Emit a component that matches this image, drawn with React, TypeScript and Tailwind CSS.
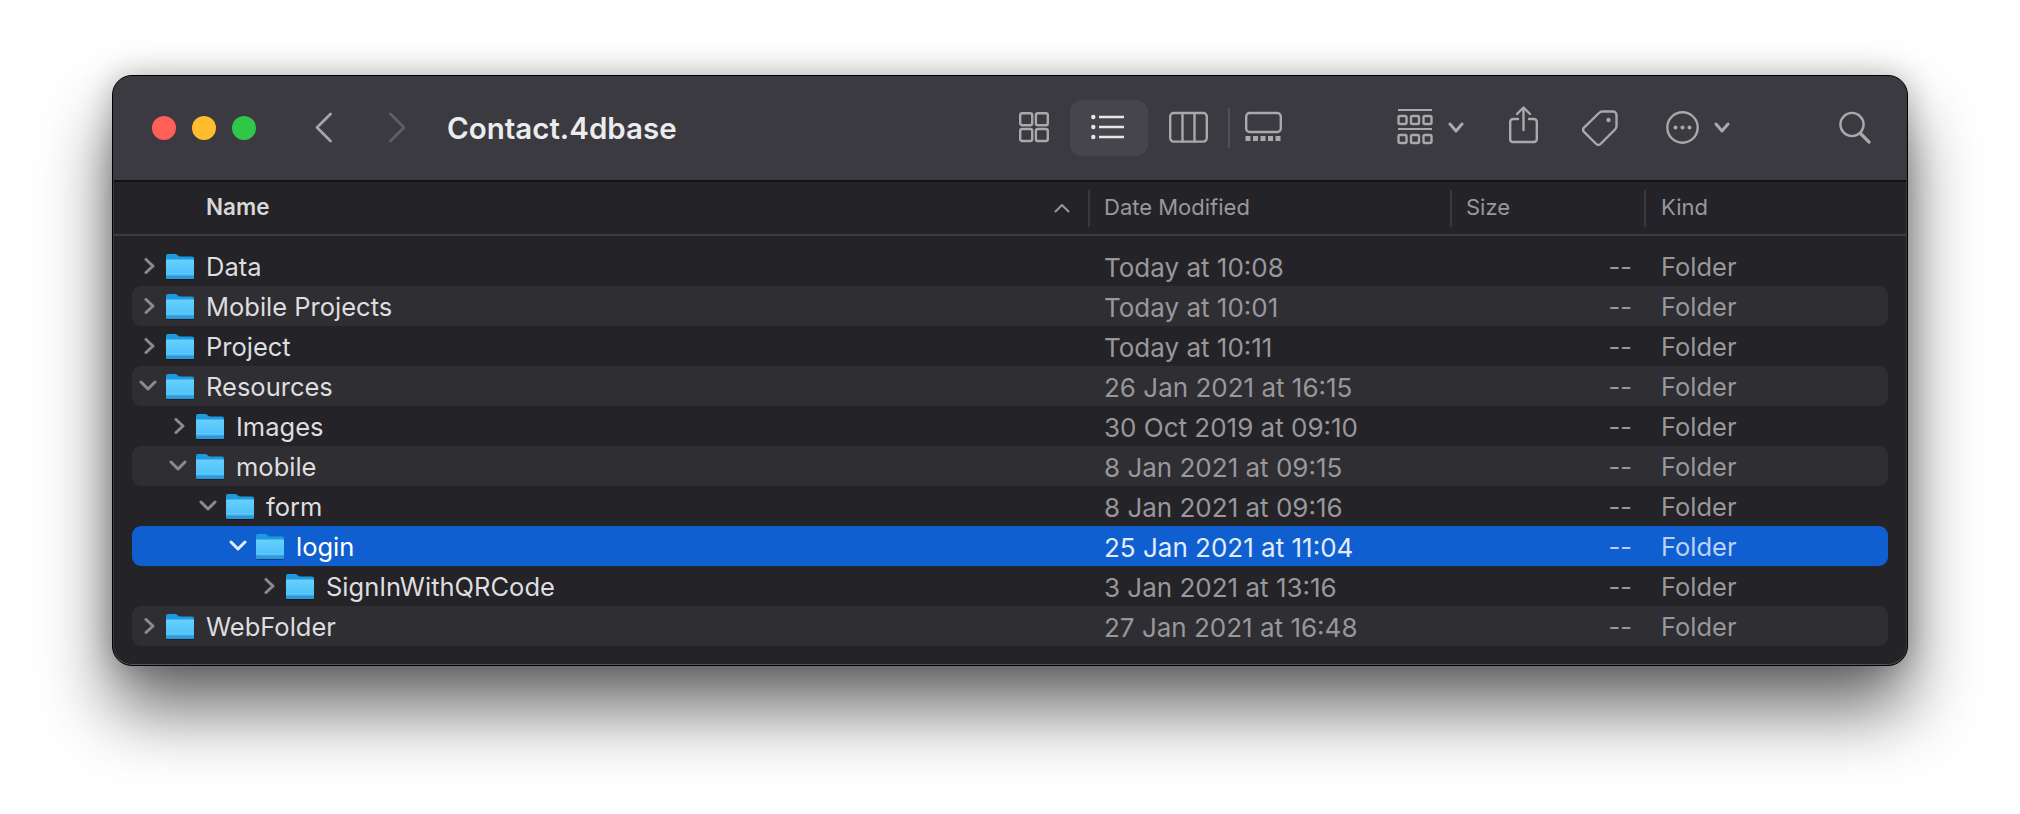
import type { ReactNode } from "react";

type Row = { name: string; date: string; depth: number; open?: boolean; selected?: boolean };

const rows: Row[] = [
  { name: "Data", date: "Today at 10:08", depth: 0 },
  { name: "Mobile Projects", date: "Today at 10:01", depth: 0 },
  { name: "Project", date: "Today at 10:11", depth: 0 },
  { name: "Resources", date: "26 Jan 2021 at 16:15", depth: 0, open: true },
  { name: "Images", date: "30 Oct 2019 at 09:10", depth: 1 },
  { name: "mobile", date: "8 Jan 2021 at 09:15", depth: 1, open: true },
  { name: "form", date: "8 Jan 2021 at 09:16", depth: 2, open: true },
  { name: "login", date: "25 Jan 2021 at 11:04", depth: 3, open: true, selected: true },
  { name: "SignInWithQRCode", date: "3 Jan 2021 at 13:16", depth: 4 },
  { name: "WebFolder", date: "27 Jan 2021 at 16:48", depth: 0 },
];

// toolbar icons share one box: 44px tall, y runs 106..150 in window-ish coords
function Tool({ w, className, children }: { w: number; className?: string; children: ReactNode }) {
  return (
    <svg
      width={w}
      height={44}
      viewBox={`0 106 ${w} 44`}
      fill="none"
      stroke="#a9a8ab"
      strokeWidth={2.4}
      strokeLinecap="round"
      strokeLinejoin="round"
      className={`block shrink-0 ${className ?? ""}`}
    >
      {children}
    </svg>
  );
}

function Chev() {
  return <path d="M2 124l6 7 6-7" strokeWidth={3} />;
}

function FolderIcon({ depth }: { depth: number }) {
  const id = `body-${depth}`;
  return (
    <svg width="28" height="27" viewBox="0 0 28 27" className="block shrink-0">
      <defs>
        <linearGradient id={id} x1="0" y1="0" x2="0" y2="1">
          <stop offset="0" stopColor="#66d1fd" />
          <stop offset="1" stopColor="#45b9f5" />
        </linearGradient>
      </defs>
      <path d="M0 3a2 2 0 0 1 2-2h7c1.5 0 2 .6 3 1.6.7.7 1.2.9 2.4.9H26a2 2 0 0 1 2 2V10H0z" fill="#1f9ae0" />
      <path d="M0 7.5a1 1 0 0 1 1-1h26a1 1 0 0 1 1 1V24a2 2 0 0 1-2 2H2a2 2 0 0 1-2-2z" fill={`url(#${id})`} />
      <rect x="0" y="20" width="28" height="1" fill="#6dcdf8" opacity="0.7" />
      <path d="M0 22.5h28V24a2 2 0 0 1-2 2H2a2 2 0 0 1-2-2z" fill="#2c97da" />
      <rect x="1" y="26" width="26" height="1" fill="#000" opacity="0.35" />
    </svg>
  );
}

function Disclosure({ open, selected }: { open?: boolean; selected?: boolean }) {
  const color = selected ? "#e6eefb" : "#8b8a8e";
  return (
    <svg width="18" height="16" viewBox="0 0 18 16" fill="none" stroke={color} strokeWidth="3" strokeLinecap="round" strokeLinejoin="round" className="block shrink-0">
      {open ? <path d="M2 4l7 7 7-7" /> : <path d="M7 1.5l7 6.5-7 6.5" />}
    </svg>
  );
}

function FileRow({ row, striped }: { row: Row; striped: boolean }) {
  const bg = row.selected ? "bg-[#105fd0]" : striped ? "bg-[#2f2e33]" : "";
  const sub = row.selected ? "text-[#bcd2f5]" : "text-[#98979b]";
  return (
    <div className={`flex h-10 items-center rounded-[9px] text-[25.5px] ${bg}`}>
      <div className="flex w-[972px] items-center" style={{ paddingLeft: row.depth * 30 + 7 }}>
        <Disclosure open={row.open} selected={row.selected} />
        <div className="ml-[9px]">
          <FolderIcon depth={row.depth} />
        </div>
        <span className={`ml-3 pt-0.5 ${row.selected ? "text-white" : "text-[#dedddf]"}`}>{row.name}</span>
      </div>
      <div className={`w-[500px] pt-0.5 text-[26px] ${row.selected ? "text-[#e3ecfa]" : sub}`}>{row.date}</div>
      <div className={`w-7 pt-0.5 text-right ${sub}`}>--</div>
      <div className={`ml-[29px] pt-0.5 ${sub}`}>Folder</div>
    </div>
  );
}

function Toolbar() {
  return (
    <div className="flex h-[106px] shrink-0 items-center border-b-2 border-b-[#111113] bg-[#3a3a40] pl-[39px]">
      <div className="flex shrink-0 gap-4">
        <div className="h-6 w-6 rounded-full bg-[#fe5f57]" />
        <div className="h-6 w-6 rounded-full bg-[#febc2e]" />
        <div className="h-6 w-6 rounded-full bg-[#30c748]" />
      </div>
      <Tool w={17} className="ml-[59px]">
        <path d="M15.5 114L2 127.5 15.5 141" strokeWidth={2.8} stroke="#a5a4a7" />
      </Tool>
      <Tool w={16} className="ml-[57px]">
        <path d="M1.5 114L15 127.5 1.5 141" strokeWidth={2.8} stroke="#606064" />
      </Tool>
      <div className="ml-[42px] w-[572px] shrink-0 text-[29.5px] font-semibold text-[#ececed]">Contact.4dbase</div>
      <Tool w={30}>
        <rect x="1.2" y="113.2" width="12" height="12" rx="2" />
        <rect x="16.9" y="113.2" width="11.9" height="12" rx="2" />
        <rect x="1.2" y="129" width="12" height="12" rx="2" />
        <rect x="16.9" y="129" width="11.9" height="12" rx="2" />
      </Tool>
      <div className="ml-[21px] flex h-14 w-[78px] shrink-0 items-center rounded-xl bg-[#45454b] pl-5">
        <Tool w={35}>
          <g stroke="#e6e6e7" strokeLinecap="butt">
            <path d="M9 117h25M9 127h25M9 137h25" />
          </g>
          <g fill="#e6e6e7" stroke="none">
            <circle cx="3.3" cy="117" r="2.2" />
            <circle cx="3.3" cy="127" r="2.2" />
            <circle cx="3.3" cy="137" r="2.2" />
          </g>
        </Tool>
      </div>
      <Tool w={39} className="ml-[21px]">
        <rect x="1.2" y="113" width="36.6" height="28.6" rx="3.5" />
        <path d="M13.5 113v28.6M25.5 113v28.6" />
      </Tool>
      <div className="ml-[20px] h-10 w-0.5 shrink-0 bg-[#505055]" />
      <Tool w={37} className="ml-[15px]">
        <rect x="1.2" y="113" width="34.6" height="19" rx="3.5" />
        <g fill="#a9a8ab" stroke="none">
          <rect x="0.5" y="136" width="5" height="5" />
          <rect x="8" y="136" width="5" height="5" />
          <rect x="15.5" y="136" width="5" height="5" />
          <rect x="23" y="136" width="5" height="5" />
          <rect x="30.5" y="136" width="5" height="5" />
        </g>
      </Tool>
      <Tool w={36} className="ml-[115px]">
        <path d="M1 110h34M1 129h34" strokeWidth={2} strokeLinecap="butt" />
        <rect x="1.5" y="116" width="8" height="8" rx="1.5" />
        <rect x="14" y="116" width="8" height="8" rx="1.5" />
        <rect x="26.5" y="116" width="8" height="8" rx="1.5" />
        <rect x="1.5" y="135" width="8" height="8" rx="1.5" />
        <rect x="14" y="135" width="8" height="8" rx="1.5" />
        <rect x="26.5" y="135" width="8" height="8" rx="1.5" />
      </Tool>
      <Tool w={16} className="ml-[15px]">
        <Chev />
      </Tool>
      <Tool w={29} className="ml-[45px]">
        <path d="M14.5 130V108M8 114l6.5-6.5L21 114" />
        <path d="M9 119H4a2.8 2.8 0 0 0-2.8 2.8v17.4A2.8 2.8 0 0 0 4 142h21a2.8 2.8 0 0 0 2.8-2.8v-17.4A2.8 2.8 0 0 0 25 119h-5" />
      </Tool>
      <Tool w={36} className="ml-[44px]">
        <path d="M20.5 111.5h10.5a3.5 3.5 0 0 1 3.5 3.5v11c0 1.5-.5 2.5-1.5 3.5l-14.5 14.5a3 3 0 0 1-4.2 0L2 131.8a3 3 0 0 1 0-4.2L17 113c1-1 2-1.5 3.5-1.5z" />
        <circle cx="26.5" cy="120" r="2.2" fill="#a9a8ab" stroke="none" />
      </Tool>
      <Tool w={33} className="ml-[48px]">
        <circle cx="16.5" cy="127.5" r="15.2" />
        <g fill="#a9a8ab" stroke="none">
          <circle cx="9.5" cy="127.5" r="2" />
          <circle cx="16.5" cy="127.5" r="2" />
          <circle cx="23.5" cy="127.5" r="2" />
        </g>
      </Tool>
      <Tool w={16} className="ml-[15px]">
        <Chev />
      </Tool>
      <Tool w={32} className="ml-[109px]">
        <circle cx="13" cy="124.5" r="11.6" />
        <path d="M21.5 133.5l8.5 8.5" strokeWidth={3.2} />
      </Tool>
    </div>
  );
}

function HeaderRow() {
  return (
    <div className="flex h-[54px] shrink-0 items-center border-b-2 border-b-[#3e3d42] text-[22px] text-[#99989c]">
      <div className="flex h-[37px] w-[975px] shrink-0 items-center pl-[93px] pr-[18px]">
        <span className="pb-0.5 text-[22.5px] font-semibold text-[#d8d8d9]">Name</span>
        <svg width="16" height="10" viewBox="0 0 16 10" fill="none" stroke="#99989c" strokeWidth="2" strokeLinecap="round" strokeLinejoin="round" className="ml-auto block">
          <path d="M1.5 8.5L8 2l6.5 6.5" />
        </svg>
      </div>
      <div className="h-[37px] w-[362px] shrink-0 border-l-2 border-l-[#39383d] pl-[14px] leading-[35px]">Date Modified</div>
      <div className="h-[37px] w-[194px] shrink-0 border-l-2 border-l-[#39383d] pl-[14px] leading-[35px]">Size</div>
      <div className="h-[37px] flex-1 border-l-2 border-l-[#39383d] pl-[15px] leading-[35px]">Kind</div>
    </div>
  );
}

export default function App() {
  return (
    <div className="h-[814px] w-[2020px] overflow-hidden bg-white pl-[112px] pt-[75px] font-['Inter','Liberation_Sans',sans-serif]">
      <div className="relative flex h-[591px] w-[1796px] flex-col overflow-hidden rounded-[20px] border border-black bg-[#242328] shadow-[0_0_30px_rgba(0,0,0,0.25),0_44px_70px_rgba(0,0,0,0.58)]">
        <Toolbar />
        <HeaderRow />
        <div className="flex flex-col px-[19px] pt-[10px]">
          {rows.map((row, i) => (
            <FileRow key={row.name} row={row} striped={i % 2 === 1} />
          ))}
        </div>
        <div className="pointer-events-none absolute inset-0 rounded-[19px] border border-x-[#3a3a3e] border-t-transparent border-b-[#55555a]" />
      </div>
    </div>
  );
}
